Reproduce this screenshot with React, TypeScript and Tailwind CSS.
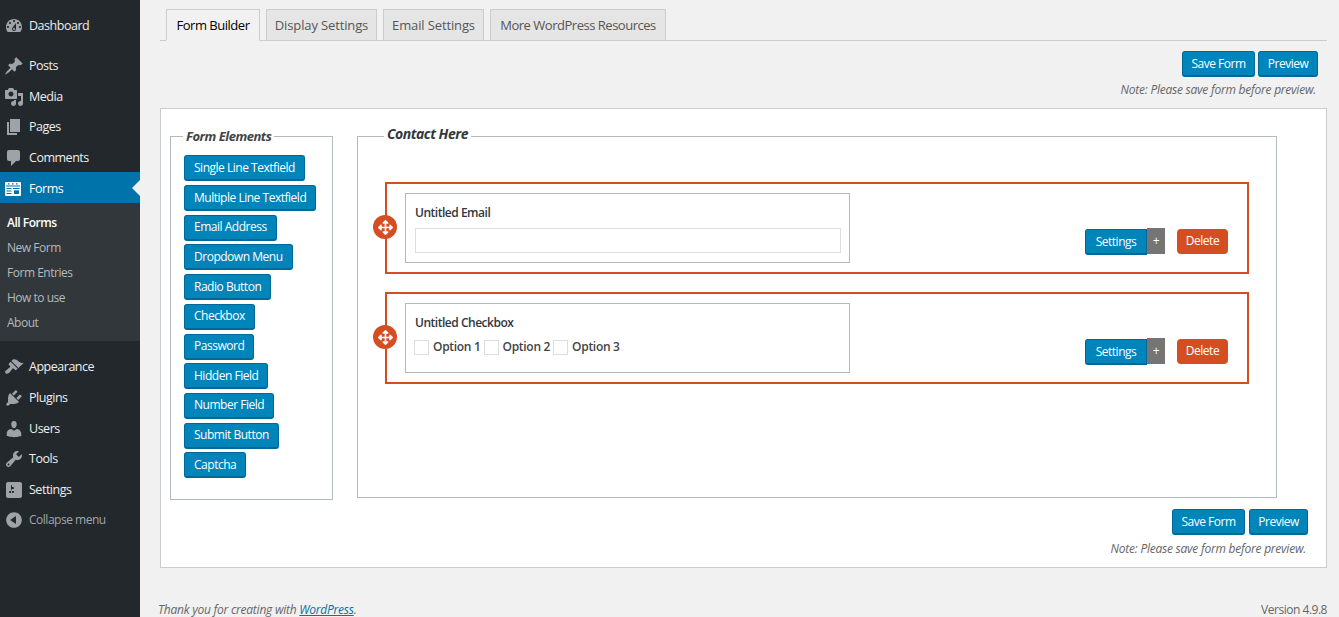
import React from "react";
import { FaArrowsAlt } from "react-icons/fa";

const paths: Record<string, string> = {
  dashboard: "M3.76 16h12.48c1.1-1.37 1.76-3.11 1.76-5 0-4.42-3.58-8-8-8s-8 3.58-8 8c0 1.89.66 3.63 1.76 5zM10 4c.55 0 1 .45 1 1s-.45 1-1 1-1-.45-1-1 .45-1 1-1zM6 6c.55 0 1 .45 1 1s-.45 1-1 1-1-.45-1-1 .45-1 1-1zm8 0c.55 0 1 .45 1 1s-.45 1-1 1-1-.45-1-1 .45-1 1-1zm-5.37 5.55L12 7v6c0 1.1-.9 2-2 2s-2-.9-2-2c0-.57.24-1.08.63-1.45zM4 10c.55 0 1 .45 1 1s-.45 1-1 1-1-.45-1-1 .45-1 1-1zm12 0c.55 0 1 .45 1 1s-.45 1-1 1-1-.45-1-1 .45-1 1-1zm-5 3c0-.55-.45-1-1-1s-1 .45-1 1 .45 1 1 1 1-.45 1-1z",
  post: "M10.44 3.02l1.82-1.82 6.36 6.35-1.83 1.82c-1.05-.68-2.48-.57-3.41.36l-.75.75c-.92.93-1.04 2.35-.35 3.41l-1.83 1.82-2.41-2.41-2.8 2.79c-.42.42-3.38 2.71-3.8 2.29s1.86-3.39 2.28-3.81l2.79-2.79L4.1 9.36l1.83-1.82c1.05.69 2.48.57 3.4-.36l.75-.75c.93-.92 1.05-2.35.36-3.41z",
  media: "M13 11V4c0-.55-.45-1-1-1h-1.67L9 1H5L3.67 3H2c-.55 0-1 .45-1 1v7c0 .55.45 1 1 1h10c.55 0 1-.45 1-1zM7 4.5c1.38 0 2.5 1.12 2.5 2.5S8.38 9.5 7 9.5 4.5 8.38 4.5 7 5.62 4.5 7 4.5zM14 6h5v10.5c0 1.38-1.12 2.5-2.5 2.5S14 17.88 14 16.5s1.12-2.5 2.5-2.5c.17 0 .34.02.5.05V9h-3V6zm-4 8.05V13h2v3.5c0 1.38-1.12 2.5-2.5 2.5S7 17.88 7 16.5 8.12 14 9.5 14c.17 0 .34.02.5.05z",
  page: "M6 15V2h10v13H6zm-1 1h8v2H3V5h2v11z",
  comments: "M5 2h9c1.1 0 2 .9 2 2v7c0 1.1-.9 2-2 2h-2l-5 5v-5H5c-1.1 0-2-.9-2-2V4c0-1.1.9-2 2-2z",
  appearance: "M14.48 11.06L7.41 3.99l1.5-1.5c.5-.56 2.3-.47 3.51.32 1.21.8 1.43 1.28 2.91 2.1 1.18.64 2.45 1.26 4.45.85zm-.71.71L6.7 4.7 4.93 6.47c-.39.39-.39 1.02 0 1.41l1.06 1.06c.39.39.39 1.03 0 1.42-.6.6-1.43 1.11-2.21 1.69-.35.26-.7.53-1.01.84C1.43 13.23.4 14.98 1.6 16.18s2.95.17 4.29-1.17c.31-.31.58-.66.84-1.01.58-.78 1.09-1.61 1.69-2.21.39-.39 1.03-.39 1.42 0l1.06 1.06c.39.39 1.02.39 1.41 0z",
  plugins: "M13.11 4.36L9.87 7.6 8 5.73l3.24-3.24c.35-.34 1.05-.2 1.56.32.52.51.66 1.21.31 1.55zm-8 1.77l.91-1.12 9.01 9.01-1.19.84c-.71.71-2.63 1.16-3.82 1.16H6.14L4.9 17.26c-.59.59-1.54.59-2.12 0-.59-.58-.59-1.53 0-2.12l1.24-1.24v-3.88c0-1.13.4-3.19 1.09-3.89zm7.26 3.97l3.24-3.24c.34-.35 1.04-.21 1.55.31.52.51.66 1.21.31 1.55l-3.24 3.25z",
  users: "M10 9.25c-2.27 0-2.73-3.44-2.73-3.44C7 4.02 7.82 2 9.97 2c2.16 0 2.98 2.02 2.71 3.81 0 0-.41 3.44-2.68 3.44zm0 2.57L12.72 10c2.39 0 4.52 2.33 4.52 4.53v2.49s-3.65 1.13-7.24 1.13c-3.65 0-7.24-1.13-7.24-1.13v-2.49c0-2.25 1.94-4.48 4.47-4.48z",
  tools: "M16.68 9.77c-1.34 1.34-3.3 1.67-4.95.99l-5.41 6.52c-.99.99-2.59.99-3.58 0s-.99-2.59 0-3.57l6.52-5.42c-.68-1.65-.35-3.61.99-4.95 1.28-1.28 3.12-1.62 4.72-1.06l-2.89 2.89 2.82 2.82 2.86-2.87c.53 1.58.18 3.39-1.08 4.65zM3.81 16.21c.4.39 1.04.39 1.43 0 .4-.4.4-1.04 0-1.43-.39-.4-1.03-.4-1.43 0-.39.39-.39 1.03 0 1.43z",
  settings: "M18 16V4c0-1.1-.9-2-2-2H4c-1.1 0-2 .9-2 2v12c0 1.1.9 2 2 2h12c1.1 0 2-.9 2-2zM8 11h1c.55 0 1 .45 1 1s-.45 1-1 1H8v1.5c0 .28-.22.5-.5.5s-.5-.22-.5-.5V13H6c-.55 0-1-.45-1-1s.45-1 1-1h1V5.5c0-.28.22-.5.5-.5s.5.22.5.5V7h1c.55 0 1 .45 1 1s-.45 1-1 1h-1v5.5c0 .28-.22.5-.5.5s-.5-.22-.5-.5V9z",
  collapse: "M10 2.16c4.33 0 7.84 3.51 7.84 7.84s-3.51 7.84-7.84 7.84S2.16 14.33 2.16 10 5.71 2.16 10 2.16zm2 11.72V6.12L6.18 9.97z",
};

function Dash({ name }: { name: string }) {
  return (
    <svg viewBox="0 0 20 20" className="w-5 h-5 shrink-0 fill-[#9ea3a8]">
      <path d={paths[name]} />
    </svg>
  );
}

function FormsIcon() {
  return (
    <svg viewBox="0 0 16 14" className="w-4 h-[14px] shrink-0">
      <rect width="16" height="14" rx="1" fill="#fff" />
      <path d="M1 3.5h14v1H1zM3 1.2h1.5v1.2H3zM7 1.2h1.5v1.2H7zM11 1.2h1.5v1.2H11zM1.5 6h5v1h-5zM1.5 8.5h5v1h-5zM1.5 11h5v1h-5zM8 6h6.5v1H8z" fill="#0073aa" />
      <rect x="9" y="8.3" width="5" height="3.7" fill="#0073aa" />
    </svg>
  );
}

function MenuItem({ icon, label, top = "pt-[1px]" }: { icon: string; label: string; top?: string }) {
  return (
    <div className={"flex h-[30.7px] items-center pl-[4px] gap-[5px] text-[#eeeeee] text-[12.5px] " + top}>
      <Dash name={icon} />
      <span>{label}</span>
    </div>
  );
}

function Sidebar() {
  return (
    <aside className="w-[140px] shrink-0 bg-[#23282d] pt-[10px] h-[617px]">
      <MenuItem icon="dashboard" label="Dashboard" top="pt-[2px]" />
      <div className="h-[9px]" />
      <MenuItem icon="post" label="Posts" top="pt-[2px]" />
      <MenuItem icon="media" label="Media" top="pt-[3px]" />
      <MenuItem icon="page" label="Pages" top="pt-[1px]" />
      <MenuItem icon="comments" label="Comments" top="pt-[2px]" />
      <div className="relative flex h-[31px] items-center pl-[5px] pt-[2px] gap-[8px] bg-[#0073aa] text-white text-[12.5px]">
        <FormsIcon />
        <span>Forms</span>
        <span className="absolute right-0 top-[8px] border-y-[8px] border-r-[8px] border-y-transparent border-r-[#f1f1f1]" />
      </div>
      <div className="bg-[#32373c] h-[138px] pt-[7px] text-[12px] text-[#b4b9be]">
        {["All Forms", "New Form", "Form Entries", "How to use", "About"].map((s, i) => (
          <div key={s} className={"h-[25px] pl-[7px] flex items-center " + (i === 0 ? "text-white font-semibold" : "")}>
            {s}
          </div>
        ))}
      </div>
      <div className="h-[10px]" />
      <MenuItem icon="appearance" label="Appearance" />
      <MenuItem icon="plugins" label="Plugins" />
      <MenuItem icon="users" label="Users" top="pt-[2px]" />
      <MenuItem icon="tools" label="Tools" />
      <MenuItem icon="settings" label="Settings" />
      <div className="flex h-[30.7px] items-center pl-[4px] gap-[5px] text-[#a0a5aa] text-[12px]">
        <Dash name="collapse" />
        <span>Collapse menu</span>
      </div>
    </aside>
  );
}

function Btn({ children, className = "px-[9px]" }: { children: string; className?: string }) {
  return (
    <button className={"h-[26px] rounded-[3px] bg-[#0085ba] border border-[#006799] border-b-2 text-white text-[12px] leading-none whitespace-nowrap " + className}>
      {children}
    </button>
  );
}

function Tab({ label, active, width }: { label: string; active?: boolean; width: string }) {
  return (
    <div
      className={
        "h-[32px] pt-[1px] flex items-center justify-center border border-[#cccccc] text-[13px] font-medium " +
        width +
        (active ? " bg-[#f1f1f1] border-b-[#f1f1f1] text-[#000000]" : " bg-[#e5e5e5] text-[#555555]")
      }
    >
      {label}
    </div>
  );
}

function SaveRow({ className, gap, noteGap, preview }: { className: string; gap: string; noteGap: string; preview: string }) {
  return (
    <div className={"flex flex-col items-end " + className}>
      <div className={"flex " + gap}>
        <Btn className="w-[73px]">Save Form</Btn>
        <Btn className={preview}>Preview</Btn>
      </div>
      <p className={"mr-[2px] italic text-[12px] leading-[16px] tracking-[-0.02em] text-[#666666] " + noteGap}>Note: Please save form before preview.</p>
    </div>
  );
}

function Row({ title, children }: { title: string; children: React.ReactNode }) {
  return (
    <div className="relative h-[92px] border-2 border-[#d54e21] flex items-center pl-[18px] pr-[19px]">
      <span className="absolute left-[-14px] top-[31px] w-[24px] h-[24px] rounded-full bg-[#d54e21] text-white flex items-center justify-center">
        <FaArrowsAlt className="w-[15px] h-[15px]" />
      </span>
      <div className="w-[445px] h-[70px] border border-[#b4b9be] px-[9px] pt-[11px]">
        <div className="text-[12px] leading-[16px] font-semibold text-[#32373c]">{title}</div>
        {children}
      </div>
      <div className="ml-auto flex items-center mt-[28px]">
        <Btn className="w-[62px] rounded-r-none">Settings</Btn>
        <span className="w-[18px] h-[26px] mt-[-2px] bg-[#757575] text-white text-[12px] flex items-center justify-center">+</span>
        <span className="ml-[12px] w-[51px] h-[25px] mt-[-2px] bg-[#d54e21] rounded-[4px] text-white text-[12px] flex items-center justify-center">Delete</span>
      </div>
    </div>
  );
}

function Box() {
  return <span className="w-[15px] h-[15px] border border-[#dddddd] inline-block" />;
}

export default function App() {
  const elements = ["Single Line Textfield", "Multiple Line Textfield", "Email Address", "Dropdown Menu", "Radio Button", "Checkbox", "Password", "Hidden Field", "Number Field", "Submit Button", "Captcha"];
  return (
    <div className="flex h-[617px] overflow-hidden bg-[#f1f1f1] font-['Open_Sans',sans-serif] tracking-[-0.03em] text-[#444444]">
      <Sidebar />
      <main className="flex-1 pl-[20px] pr-[12px]">
        <div className="flex gap-[6px] pl-[6px] pt-[9px] h-[41px] border-b border-[#cccccc]">
          <Tab label="Form Builder" active width="w-[94px]" />
          <Tab label="Display Settings" width="w-[111px] tracking-[-0.01em]" />
          <Tab label="Email Settings" width="w-[101px] tracking-[-0.01em]" />
          <Tab label="More WordPress Resources" width="w-[176px]" />
        </div>
        <SaveRow className="mt-[10px] pr-[9px]" gap="gap-[3px]" noteGap="mt-[5px]" preview="w-[60px]" />
        <section className="mt-[10px] h-[460px] bg-white border border-[#cccccc] pl-[9px] pr-[18px] pt-[27px]">
          <div className="flex gap-[24px] mr-[31px]">
            <div className="relative w-[163px] h-[364px] border border-[#b4b9be] pl-[13px] pt-[18.4px] flex flex-col items-start gap-[3.7px]">
              <span className="absolute left-[12px] top-[-9px] bg-white px-[3px] italic font-bold text-[13px] leading-[16px] text-[#444444]">Form Elements</span>
              {elements.map((e) => (
                <Btn key={e}>{e}</Btn>
              ))}
            </div>
            <div className="relative flex-1 h-[362px] border border-[#b4b9be] px-[27px] pt-[45px] flex flex-col gap-[18px]">
              <span className="absolute left-[26px] top-[-12px] bg-white px-[3px] italic font-bold text-[14px] leading-[18px] text-[#32373c]">Contact Here</span>
              <Row title="Untitled Email">
                <div className="mt-[7px] w-[426px] h-[25px] border border-[#dddddd]" />
              </Row>
              <Row title="Untitled Checkbox">
                <div className="mt-[7px] ml-[-1px] flex items-center text-[12px] font-semibold tracking-[-0.025em] text-[#444444] gap-[3px]">
                  <Box /><span className="ml-[1px]">Option 1</span><Box /><span className="ml-[1px]">Option 2</span><Box /><span className="ml-[1px]">Option 3</span>
                </div>
              </Row>
            </div>
          </div>
          <SaveRow className="mt-[9px]" gap="gap-[4px]" noteGap="mt-[6px]" preview="w-[59px]" />
        </section>
        <footer className="mt-[35px] flex justify-between text-[12px] leading-[14px] text-[#666666] ml-[-2px]">
          <span className="italic tracking-[-0.02em]">Thank you for creating with <span className="text-[#0073aa] underline">WordPress</span>.</span>
          <span>Version 4.9.8</span>
        </footer>
      </main>
    </div>
  );
}
